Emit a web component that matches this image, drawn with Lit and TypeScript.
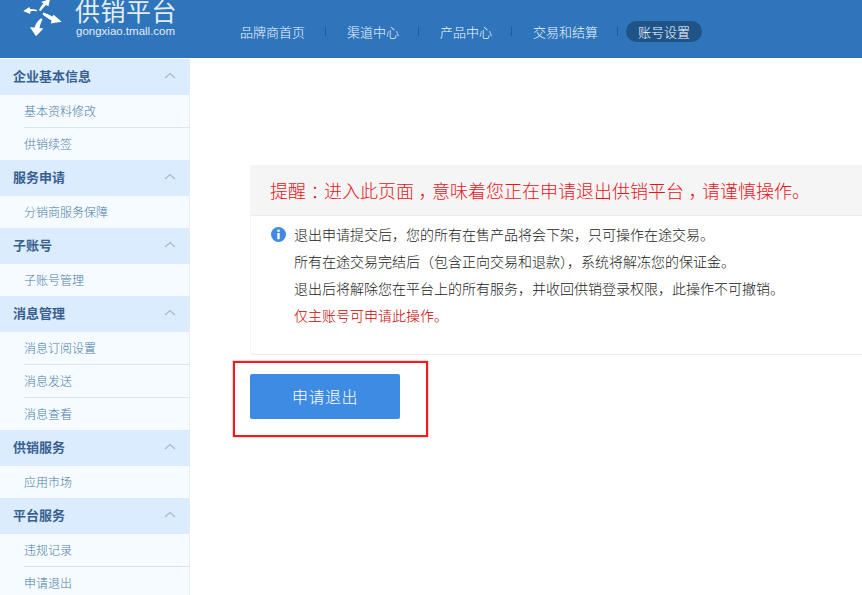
import { LitElement, html, css, svg } from "lit";
import { customElement } from "lit/decorators.js";

const GROUPS: { title: string; items: string[] }[] = [
  { title: "企业基本信息", items: ["基本资料修改", "供销续签"] },
  { title: "服务申请", items: ["分销商服务保障"] },
  { title: "子账号", items: ["子账号管理"] },
  { title: "消息管理", items: ["消息订阅设置", "消息发送", "消息查看"] },
  { title: "供销服务", items: ["应用市场"] },
  { title: "平台服务", items: ["违规记录", "申请退出"] },
];
const NAV = ["品牌商首页", "渠道中心", "产品中心", "交易和结算"];

@customElement("app-root")
export class AppRoot extends LitElement {
  static styles = css`
    :host {
      display: block;
      width: 862px;
      height: 595px;
      overflow: hidden;
      background: #fff;
      font-family: "Noto Sans CJK SC", "Liberation Sans", sans-serif;
    }
    .header {
      height: 58px;
      background: #2e75bb;
      display: flex;
      box-sizing: border-box;
      padding-left: 22px;
      overflow: hidden;
    }
    .logo-icon { width: 40px; height: 40px; flex: none; }
    .logo-text { margin-left: 13px; width: 128px; flex: none; color: #e3edf7; }
    .logo-cn {
      font-size: 25px;
      line-height: 26px;
      margin-top: -3px;
      letter-spacing: 0.5px;
      font-weight: 400;
      white-space: nowrap;
    }
    .logo-en {
      font-family: "Liberation Sans", sans-serif;
      font-size: 11.5px;
      line-height: 14px;
      margin-top: 1px;
      margin-left: 1px;
      white-space: nowrap;
    }
    .nav {
      display: flex;
      align-items: center;
      height: 21px;
      margin-top: 21px;
      margin-left: 37px;
      color: #eef5fb;
      font-size: 13px;
      line-height: 21px;
      font-weight: 300;
      white-space: nowrap;
    }
    .nav-item { margin-right: 19px; }
    .nav-item.first { margin-right: 20px; }
    .sep { width: 1px; height: 9px; background: #1c5c9e; margin-right: 21px; }
    .sep.last { margin-right: 8px; }
    .pill {
      background: #1f5488;
      color: #fff;
      border-radius: 11px;
      padding: 0 12px;
    }
    .body { display: flex; margin-top: 1px; height: 536px; }
    .sidebar {
      width: 190px;
      flex: none;
      box-sizing: border-box;
      border-right: 1px solid #e6edf4;
      background: #f6fbff;
    }
    .group-head {
      height: 36px;
      box-sizing: border-box;
      background: #daecfd;
      display: flex;
      align-items: center;
      justify-content: space-between;
      padding: 0 13px 4px;
      font-size: 13px;
      font-weight: 700;
      color: #38608f;
    }
    .chev { width: 12px; height: 7px; display: block; }
    .item {
      height: 32px;
      margin-left: 24px;
      font-size: 12px;
      line-height: 32px;
      color: #4a7ba6;
      font-weight: 300;
    }
    .item + .item { border-top: 1px solid #d9e6f2; }
    .main { flex: 1; min-width: 0; padding: 106px 0 0 60px; }
    .notice-head {
      height: 51px;
      box-sizing: border-box;
      background: #f5f5f5;
      border-bottom: 1px solid #ececec;
      border-radius: 3px 0 0 0;
      padding-left: 20px;
      font-size: 18px;
      font-weight: 300;
      line-height: 50px;
      color: #e8141a;
      white-space: nowrap;
    }
    .mid { font-feature-settings: "halt"; padding: 0 0.25em; }
    .notice-body {
      height: 139px;
      box-sizing: border-box;
      border-left: 1px solid #f4f4f4;
      border-bottom: 1px solid #ececec;
      border-radius: 0 0 0 3px;
      padding: 5px 0 0 20px;
      display: flex;
    }
    .info { width: 15px; height: 15px; flex: none; margin-top: 6px; }
    .lines {
      margin-left: 8px;
      font-size: 14px;
      line-height: 27px;
      color: #222;
      font-weight: 300;
      white-space: nowrap;
    }
    .warn { color: #c80000; }
    .focus {
      margin: 6px 0 0 -17px;
      width: 195px;
      height: 76px;
      box-sizing: border-box;
      border: 2px solid #f01a1f;
      box-shadow: 0 0 1px #f01a1f;
      padding: 11px 0 0 15px;
    }
    .btn {
      width: 150px;
      height: 45px;
      border: 0;
      padding: 0 0 2px;
      background: #3e8be3;
      border-radius: 2px;
      color: #fff;
      font-family: inherit;
      font-size: 16px;
      font-weight: 300;
      letter-spacing: 0.5px;
      display: block;
    }
  `;

  private chevron() {
    return svg`<svg class="chev" viewBox="0 0 12 7"><path d="M1 6 L6 1.5 L11 6" fill="none" stroke="#a3bcd6" stroke-width="1.2"/></svg>`;
  }

  render() {
    return html`
      <div class="header">
        <svg class="logo-icon" viewBox="22 0 40 40">
          <g fill="#fff">
            <path d="M23.3 11 L29.5 7 L30 9 C32.5 9 35 9.3 37.2 10 L36.6 11.6 C34.5 11 32.5 11 30.5 11.4 L30 14 Z" />
            <path d="M50 -1 L48.5 6.2 L46 5 C44 7 42 9 40.6 11 L39 10.2 C40 7.5 42 5 43.5 3.2 L41 2 Z" />
            <path d="M43.2 12.6 C46.5 13.6 49.5 14.8 52.4 16.4 L53.6 14.8 L61.7 21.8 L50.8 23.6 L51.6 20.6 C48.5 18.5 45.8 16.8 42.6 14.4 Z" />
            <path d="M41 18.2 L42.6 19.6 C41 22.5 40 25 39.6 28 L43.4 28.4 L36 36.2 L30 27.2 L34.6 27.6 C35.4 24 37.8 20.6 41 18.2 Z" />
          </g>
        </svg>
        <div class="logo-text">
          <div class="logo-cn">供销平台</div>
          <div class="logo-en">gongxiao.tmall.com</div>
        </div>
        <div class="nav">
          ${NAV.map(
            (n, i) => html`<span class="nav-item ${i === 0 ? "first" : ""}">${n}</span><span class="sep ${i === NAV.length - 1 ? "last" : ""}"></span>`
          )}
          <span class="pill">账号设置</span>
        </div>
      </div>
      <div class="body">
        <div class="sidebar">
          ${GROUPS.map(
            (g) => html`
              <div class="group-head"><span>${g.title}</span>${this.chevron()}</div>
              ${g.items.map((t) => html`<div class="item">${t}</div>`)}
            `
          )}
        </div>
        <div class="main">
          <div class="notice-head">提醒<span class="mid">：</span>进入此页面<span class="mid">，</span>意味着您正在申请退出供销平台<span class="mid">，</span>请谨慎操作。</div>
          <div class="notice-body">
            <svg class="info" viewBox="0 0 15 15">
              <circle cx="7.5" cy="7.5" r="7.5" fill="#3e8be3" />
              <rect x="6.3" y="2.6" width="2.4" height="2.2" fill="#fff" />
              <rect x="6.3" y="6" width="2.4" height="6.2" fill="#fff" />
            </svg>
            <div class="lines">
              <div>退出申请提交后，您的所有在售产品将会下架，只可操作在途交易。</div>
              <div>所有在途交易完结后（包含正向交易和退款），系统将解冻您的保证金。</div>
              <div>退出后将解除您在平台上的所有服务，并收回供销登录权限，此操作不可撤销。</div>
              <div class="warn">仅主账号可申请此操作。</div>
            </div>
          </div>
          <div class="focus"><button class="btn">申请退出</button></div>
        </div>
      </div>
    `;
  }
}
